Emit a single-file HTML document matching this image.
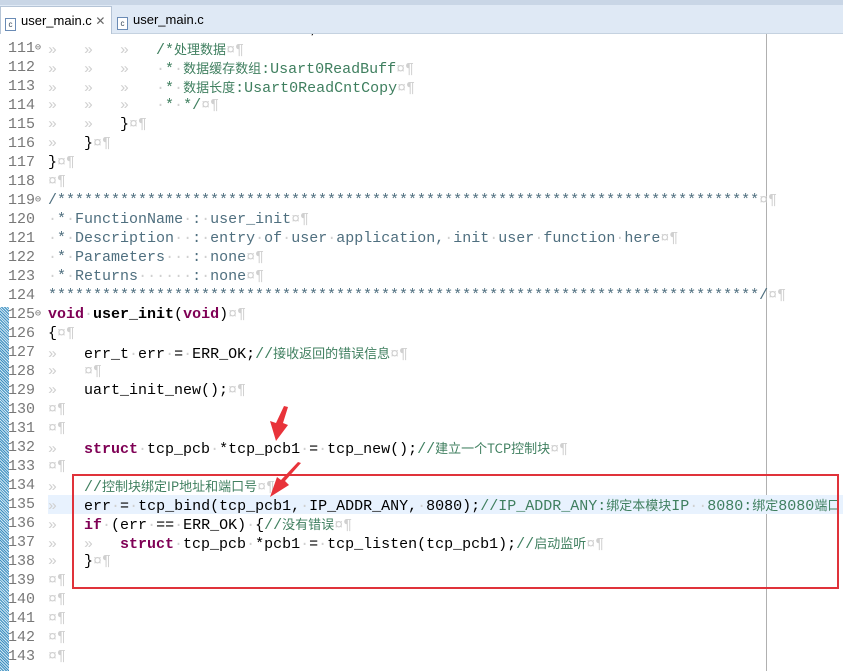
<!DOCTYPE html>
<html><head><meta charset="utf-8"><style>
body{margin:0;width:843px;height:671px;overflow:hidden;background:#fff;position:relative;font-family:"Liberation Mono",monospace;font-size:15px}
.tabs{position:absolute;left:0;top:0;width:843px;height:33px;background:#dfe9f5;border-bottom:1px solid #c5d2e0;z-index:5}
.tabs .top{position:absolute;left:0;top:0;width:843px;height:5px;background:#c9d6e6}
.tab{position:absolute;top:6px;height:27px;font-family:"Liberation Sans",sans-serif;font-size:13px;line-height:27px;color:#000}
.t1{left:0;width:110px;background:#fff;border:1px solid #b5c4d6;border-bottom:none}
.t2{left:113px;width:100px}
.ic{display:inline-block;width:9px;height:11px;border:1px solid #6a8bb5;font-size:8px;line-height:11px;text-align:center;margin:0 5px 0 4px;vertical-align:-2px;color:#345;background:#fff}
.gut{position:absolute;left:0;top:307px;width:9px;height:364px;background:repeating-linear-gradient(45deg,#3d8fc0 0 1px,#cfe6f3 1px 2px)}
.ln{position:absolute;left:0;height:19px;line-height:19px;white-space:pre;width:843px}
.n{position:absolute;left:8px;color:#787878}
.c{position:absolute;left:48px;color:#000}
.w{color:#d0d0d0}
.k{color:#7f0055;font-weight:bold}
.cm{color:#3f7f5f}
.dc{color:#4f6f7f}
.z{font-family:"Noto Sans CJK SC",sans-serif;font-size:13px}
.hl{background:#e8f2fe}
.margin{position:absolute;left:766px;top:34px;width:1px;height:637px;background:#b0b0b0}
.box{position:absolute;left:72px;top:474px;width:763px;height:111px;border:2.5px solid #e0323a;z-index:3}
.fold{position:absolute;left:35px;color:#777;font-size:10px}
</style></head><body>
<div class="margin"></div>
<div class="gut"></div>
<div class="ln" style="top:20px"><span class="n">110</span><span class="c"><span class="w">»   »   »   </span>Usart0ReadCnt = 0;</span></div>
<div class="ln" style="top:39px"><span class="n">111</span><span class="fold" >⊖</span><span class="c"><span class="w">»   »   »   </span><span class="cm">/*<span class="z">处理数据</span></span><span class="w">¤¶</span></span></div>
<div class="ln" style="top:58px"><span class="n">112</span><span class="c"><span class="w">»   »   »   ·</span><span class="cm">*<span class="w">·</span><span class="z">数据缓存数组</span>:Usart0ReadBuff</span><span class="w">¤¶</span></span></div>
<div class="ln" style="top:77px"><span class="n">113</span><span class="c"><span class="w">»   »   »   ·</span><span class="cm">*<span class="w">·</span><span class="z">数据长度</span>:Usart0ReadCntCopy</span><span class="w">¤¶</span></span></div>
<div class="ln" style="top:96px"><span class="n">114</span><span class="c"><span class="w">»   »   »   ·</span><span class="cm">*<span class="w">·</span>*/</span><span class="w">¤¶</span></span></div>
<div class="ln" style="top:115px"><span class="n">115</span><span class="c"><span class="w">»   »   </span>}<span class="w">¤¶</span></span></div>
<div class="ln" style="top:134px"><span class="n">116</span><span class="c"><span class="w">»   </span>}<span class="w">¤¶</span></span></div>
<div class="ln" style="top:153px"><span class="n">117</span><span class="c">}<span class="w">¤¶</span></span></div>
<div class="ln" style="top:172px"><span class="n">118</span><span class="c"><span class="w">¤¶</span></span></div>
<div class="ln" style="top:191px"><span class="n">119</span><span class="fold">⊖</span><span class="c"><span class="dc">/******************************************************************************</span><span class="w">¤¶</span></span></div>
<div class="ln" style="top:210px"><span class="n">120</span><span class="c"><span class="w">·</span><span class="dc">*<span class="w">·</span>FunctionName<span class="w">·</span>:<span class="w">·</span>user_init</span><span class="w">¤¶</span></span></div>
<div class="ln" style="top:229px"><span class="n">121</span><span class="c"><span class="w">·</span><span class="dc">*<span class="w">·</span>Description<span class="w">··</span>:<span class="w">·</span>entry<span class="w">·</span>of<span class="w">·</span>user<span class="w">·</span>application,<span class="w">·</span>init<span class="w">·</span>user<span class="w">·</span>function<span class="w">·</span>here</span><span class="w">¤¶</span></span></div>
<div class="ln" style="top:248px"><span class="n">122</span><span class="c"><span class="w">·</span><span class="dc">*<span class="w">·</span>Parameters<span class="w">···</span>:<span class="w">·</span>none</span><span class="w">¤¶</span></span></div>
<div class="ln" style="top:267px"><span class="n">123</span><span class="c"><span class="w">·</span><span class="dc">*<span class="w">·</span>Returns<span class="w">······</span>:<span class="w">·</span>none</span><span class="w">¤¶</span></span></div>
<div class="ln" style="top:286px"><span class="n">124</span><span class="c"><span class="dc">*******************************************************************************/</span><span class="w">¤¶</span></span></div>
<div class="ln" style="top:305px"><span class="n">125</span><span class="fold">⊖</span><span class="c"><span class="k">void</span><span class="w">·</span><b>user_init</b>(<span class="k">void</span>)<span class="w">¤¶</span></span></div>
<div class="ln" style="top:324px"><span class="n">126</span><span class="c">{<span class="w">¤¶</span></span></div>
<div class="ln" style="top:343px"><span class="n">127</span><span class="c"><span class="w">»   </span>err_t<span class="w">·</span>err<span class="w">·</span>=<span class="w">·</span>ERR_OK;<span class="cm">//<span class="z">接收返回的错误信息</span></span><span class="w">¤¶</span></span></div>
<div class="ln" style="top:362px"><span class="n">128</span><span class="c"><span class="w">»   ¤¶</span></span></div>
<div class="ln" style="top:381px"><span class="n">129</span><span class="c"><span class="w">»   </span>uart_init_new();<span class="w">¤¶</span></span></div>
<div class="ln" style="top:400px"><span class="n">130</span><span class="c"><span class="w">¤¶</span></span></div>
<div class="ln" style="top:419px"><span class="n">131</span><span class="c"><span class="w">¤¶</span></span></div>
<div class="ln" style="top:438px"><span class="n">132</span><span class="c"><span class="w">»   </span><span class="k">struct</span><span class="w">·</span>tcp_pcb<span class="w">·</span>*tcp_pcb1<span class="w">·</span>=<span class="w">·</span>tcp_new();<span class="cm">//<span class="z">建立一个TCP控制块</span></span><span class="w">¤¶</span></span></div>
<div class="ln" style="top:457px"><span class="n">133</span><span class="c"><span class="w">¤¶</span></span></div>
<div class="ln" style="top:476px"><span class="n">134</span><span class="c"><span class="w">»   </span><span class="cm">//<span class="z">控制块绑定IP地址和端口号</span></span><span class="w">¤¶</span></span></div>
<div class="ln hl" style="top:495px;left:48px;width:795px"></div>
<div class="ln" style="top:495px"><span class="n">135</span><span class="c"><span class="w">»   </span>err<span class="w">·</span>=<span class="w">·</span>tcp_bind(tcp_pcb1,<span class="w">·</span>IP_ADDR_ANY,<span class="w">·</span>8080);<span class="cm">//IP_ADDR_ANY:<span class="z">绑定本模块</span>IP<span class="w">··</span>8080:<span class="z">绑定</span>8080<span class="z">端口</span></span></span></div>
<div class="ln" style="top:514px"><span class="n">136</span><span class="c"><span class="w">»   </span><span class="k">if</span><span class="w">·</span>(err<span class="w">·</span>==<span class="w">·</span>ERR_OK)<span class="w">·</span>{<span class="cm">//<span class="z">没有错误</span></span><span class="w">¤¶</span></span></div>
<div class="ln" style="top:533px"><span class="n">137</span><span class="c"><span class="w">»   »   </span><span class="k">struct</span><span class="w">·</span>tcp_pcb<span class="w">·</span>*pcb1<span class="w">·</span>=<span class="w">·</span>tcp_listen(tcp_pcb1);<span class="cm">//<span class="z">启动监听</span></span><span class="w">¤¶</span></span></div>
<div class="ln" style="top:552px"><span class="n">138</span><span class="c"><span class="w">»   </span>}<span class="w">¤¶</span></span></div>
<div class="ln" style="top:571px"><span class="n">139</span><span class="c"><span class="w">¤¶</span></span></div>
<div class="ln" style="top:590px"><span class="n">140</span><span class="c"><span class="w">¤¶</span></span></div>
<div class="ln" style="top:609px"><span class="n">141</span><span class="c"><span class="w">¤¶</span></span></div>
<div class="ln" style="top:628px"><span class="n">142</span><span class="c"><span class="w">¤¶</span></span></div>
<div class="ln" style="top:647px"><span class="n">143</span><span class="c"><span class="w">¤¶</span></span></div>
<div class="box"></div>
<svg style="position:absolute;left:0;top:0;z-index:4" width="843" height="671">
<path d="M288 407 L283 423 L288 425 L276 441 L270 421 L276 423 L284 406 Z" fill="#e8333a"/>
<path d="M301 463 L285 481 L289 485 L270 497 L277 477 L281 480 L298 462 Z" fill="#e8333a"/>
</svg>
<div class="tabs"><div class="top"></div>
<div class="tab t1"><span class="ic">c</span>user_main.c <span style="color:#666;font-size:12px">✕</span></div>
<div class="tab t2"><span class="ic">c</span>user_main.c</div>
</div>
</body></html>
